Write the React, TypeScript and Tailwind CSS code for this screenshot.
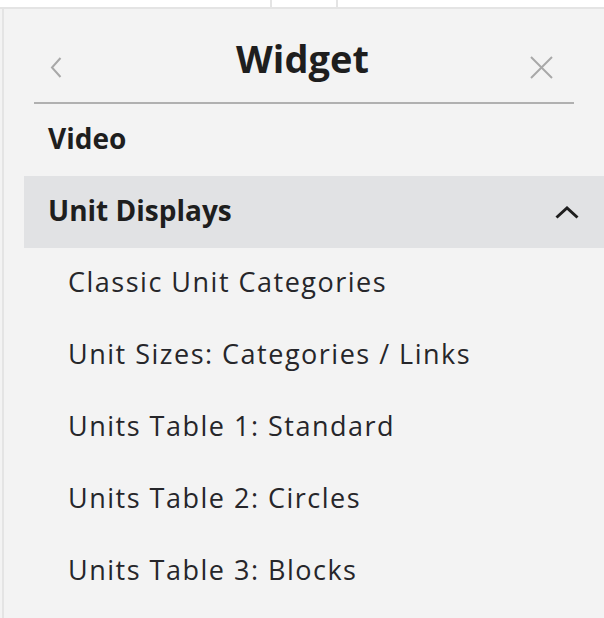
const subItems = [
  'Classic Unit Categories',
  'Unit Sizes: Categories / Links',
  'Units Table 1: Standard',
  'Units Table 2: Circles',
  'Units Table 3: Blocks',
];

export default function App() {
  return (
    <div
      className="w-[604px] h-[618px] bg-white overflow-hidden flex flex-col"
      style={{ fontFamily: '"Open Sans", Lato, sans-serif' }}
    >
      {/* top grid strip */}
      <div className="h-[9px] flex border-b-2 border-[#e4e4e4] shrink-0">
        <div className="w-[272px] border-r-2 border-[#e4e4e4]" />
        <div className="w-[66px] border-r-2 border-[#e4e4e4]" />
        <div className="flex-1" />
      </div>

      <div className="flex-1 flex bg-[#f3f3f3] pl-[2px]">
        <div className="flex-1 border-l-2 border-[#e4e4e4] flex flex-col">
          {/* Header */}
          <div className="mx-[30px] h-[95px] border-b-2 border-[#b0b0b0] grid grid-cols-[1fr_auto_1fr] items-start">
            <button className="justify-self-start w-[12px] ml-[16px] mt-[48px] text-[#a8a8a8]">
              <svg width="12" height="21" viewBox="0 0 12 21" fill="none" stroke="currentColor" strokeWidth={2}>
                <path d="M10.5 1 L2 10.5 L10.5 20" />
              </svg>
            </button>
            <h1 className="mt-[30px] mr-[3px] text-[38px] font-bold text-[#1e1e1e] leading-none">Widget</h1>
            <button className="justify-self-end w-[23px] mr-[21px] mt-[47px] text-[#a8a8a8]">
              <svg width="23" height="23" viewBox="0 0 23 23" fill="none" stroke="currentColor" strokeWidth={2}>
                <path d="M1 1 L22 22 M22 1 L1 22" />
              </svg>
            </button>
          </div>

          {/* List */}
          <div className="ml-[20px] flex flex-col">
            <div className="h-[72px] flex items-center px-[24px] pb-[4px] text-[28px] font-bold text-[#1e1e1e]">
              Video
            </div>
            <div className="h-[72px] flex items-center justify-between pl-[24px] pr-[25px] bg-[#e1e2e4] text-[28px] font-bold text-[#1e1e1e]">
              <span className="pb-[4px]">Unit Displays</span>
              <svg width="24" height="13" viewBox="0 0 24 13" fill="none" stroke="#1e1e1e" strokeWidth={3}>
                <path d="M1.5 11.5 L12 2 L22.5 11.5" />
              </svg>
            </div>
            {subItems.map((item) => (
              <div
                key={item}
                className="h-[72px] flex items-center pl-[44px] pb-[3px] text-[27px] tracking-[1.5px] text-[#26262a]"
              >
                {item}
              </div>
            ))}
          </div>
        </div>
      </div>
    </div>
  );
}
